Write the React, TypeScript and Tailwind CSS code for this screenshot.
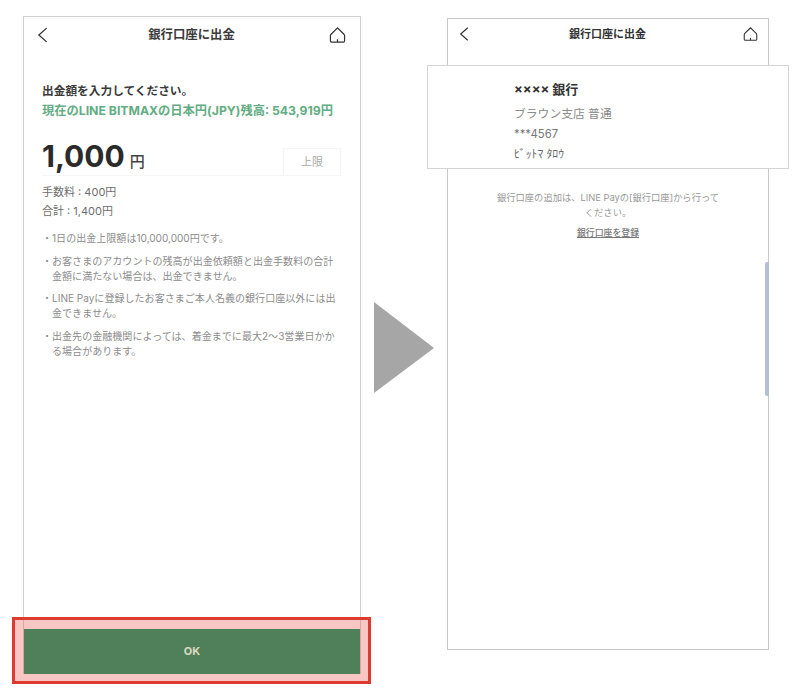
import React from "react";

const font = { fontFamily: 'Inter, "Noto Sans CJK JP", sans-serif' };

function Back({ className }: { className: string }) {
  return (
    <svg viewBox="0 0 12 18" className={className} fill="none" stroke="#333" strokeWidth="1.4">
      <path d="M10.5 1.5 2 9l8.5 7.5" />
    </svg>
  );
}

function Home({ className }: { className: string }) {
  return (
    <svg viewBox="0 0 18 18" className={className} fill="none" stroke="#333" strokeWidth="1.3">
      <path d="M9 1.5 2.2 8.2c-.5.5-.7 1-.7 1.6v5.4c0 .8.6 1.3 1.3 1.3h12.4c.7 0 1.3-.5 1.3-1.3V9.8c0-.6-.2-1.1-.7-1.6L9 1.5Z" />
      <path d="M9 13.5v3" />
    </svg>
  );
}

const notes = [
  ["1日の出金上限額は10,000,000円です。"],
  ["お客さまのアカウントの残高が出金依頼額と出金手数料の合計", "金額に満たない場合は、出金できません。"],
  ["LINE Payに登録したお客さまご本人名義の銀行口座以外には出", "金できません。"],
  ["出金先の金融機関によっては、着金までに最大2～3営業日かか", "る場合があります。"],
];

export default function App() {
  return (
    <div className="relative flex h-[697px] w-[800px] items-start overflow-hidden bg-white" style={font}>
      <div className="relative ml-[23px] mt-[16px] flex h-[658px] w-[338px] flex-col border-x border-t border-[#d2d2d2]">
        <header className="flex h-[36px] shrink-0 items-center justify-between pl-[13px] pr-[14px]">
          <Back className="h-[18px] w-[11px]" />
          <span className="ml-[6px] text-[12.4px] font-bold text-[#3a3a3a]">銀行口座に出金</span>
          <Home className="h-[18px] w-[17px]" />
        </header>
        <main className="flex-1 px-[18px] pt-[28px]">
          <p className="text-[11.7px] font-bold leading-[20px] text-[#3a3a3a]">出金額を入力してください。</p>
          <p className="whitespace-nowrap text-[12.25px] font-bold leading-[19px] text-[#62ad83]">
            現在のLINE BITMAXの日本円(JPY)残高: 543,919円
          </p>
          <div className="mt-[17px] flex items-end justify-between border-b border-[#f6f6f6]">
            <div className="flex items-baseline gap-[5px]">
              <span className="text-[30px] font-bold leading-[38px] text-[#2b2b2b]">1,000</span>
              <span className="text-[15px] font-medium leading-[20px] text-[#444]">円</span>
            </div>
            <div className="mr-[1px] flex h-[27px] w-[58px] items-center justify-center border border-b-0 border-[#f3f3f3] text-[11px] text-[#aaa]">
              上限
            </div>
          </div>
          <p className="mt-[7px] text-[11px] leading-[19px] text-[#6e6e6e]">手数料 : 400円</p>
          <p className="text-[11px] leading-[19px] text-[#6e6e6e]">合計 : 1,400円</p>
          <ul className="mt-[10px] flex flex-col gap-[7.5px] text-[10.05px] leading-[15px] text-[#8c8c8c]">
            {notes.map((lines, i) => (
              <li key={i} className="flex">
                <span className="w-[10px] shrink-0 text-center">・</span>
                <span className="whitespace-nowrap">
                  {lines.map((l) => (
                    <span key={l} className="block">{l}</span>
                  ))}
                </span>
              </li>
            ))}
          </ul>
        </main>
        <div className="absolute -bottom-[10px] -left-[12px] -right-[11px] h-[67px] border-[3px] border-[#dd3b30] bg-[#e8473a]/30" />
        <button className="relative z-10 h-[45px] shrink-0 bg-[#4f8059] text-[11px] font-bold text-[#ddd8c0]">OK</button>
      </div>

      <svg viewBox="0 0 60 91" className="ml-[13px] mt-[302px] h-[91px] w-[60px] shrink-0">
        <path d="M0 0 60 46 0 91Z" fill="#a6a6a6" />
      </svg>

      <div className="relative ml-[13px] mt-[18px] flex h-[632px] w-[322px] flex-col border border-[#c9c9c9]">
        <header className="flex h-[30px] shrink-0 items-center justify-between pl-[11px] pr-[10px]">
          <Back className="h-[16px] w-[10px]" />
          <span className="ml-[3px] text-[11px] font-bold text-[#333]">銀行口座に出金</span>
          <Home className="h-[16px] w-[15px]" />
        </header>
        <section className="mx-[-21px] mt-[16px] h-[104px] border border-[#d4d4d4] bg-white pl-[86px] pt-[13px]">
          <p className="text-[13px] font-bold leading-[20px] text-[#333]">×××× 銀行</p>
          <p className="mt-[5px] text-[11.8px] leading-[21px] text-[#8a8a8a]">ブラウン支店 普通</p>
          <p className="text-[11.3px] leading-[18px] text-[#777]">***4567</p>
          <p className="mt-[2px] text-[11.7px] leading-[18px] text-[#666]">ﾋﾞｯﾄﾏ ﾀﾛｳ</p>
        </section>
        <p className="mt-[21px] px-[45px] text-center text-[9.3px] leading-[15px] text-[#999]">
          銀行口座の追加は、LINE Payの[銀行口座]から行ってください。
        </p>
        <p className="mt-[5px] text-center text-[8.9px] font-medium leading-[15px] text-[#777] underline">銀行口座を登録</p>
        <div className="absolute right-[-1px] top-[243px] h-[134px] w-[4px] rounded-l-[2px] bg-[#b4bfd0]" />
      </div>
    </div>
  );
}
